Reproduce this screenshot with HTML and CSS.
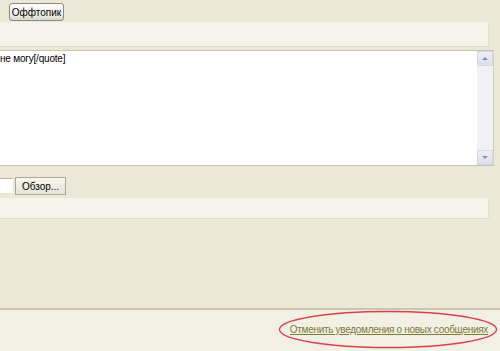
FILE: index.html
```html
<!DOCTYPE html>
<html lang="ru">
<head>
    <meta charset="UTF-8">
    <title>Ответ</title>
    <link rel="stylesheet" href="styles.css">
</head>
<body>
    <!-- Форма ответа -->
    <div class="reply-form">
        <div class="toolbar">
            <button class="btn">Оффтопик</button>
        </div>
        <div class="field-bar"></div>

        <div class="editor">
            <div class="editor-text">не могу[/quote]</div>
            <div class="scrollbar">
                <div class="scroll-btn"><span class="arrow-up"></span></div>
                <div class="scroll-track"></div>
                <div class="scroll-btn"><span class="arrow-down"></span></div>
            </div>
        </div>

        <div class="file-row">
            <span class="file-input"></span>
            <button class="btn btn-browse">Обзор...</button>
        </div>
        <div class="field-bar field-bar-low"></div>
    </div>

    <!-- Подвал темы -->
    <div class="topic-footer">
        <span class="mark">
            <a href="#" class="unsubscribe">Отменить уведомления о новых сообщениях</a>
            <svg class="ellipse" width="222" height="40" viewBox="0 0 222 40">
                <ellipse cx="110" cy="19.5" rx="108.5" ry="18" fill="none" stroke="#d9404c" stroke-width="1.4"/>
            </svg>
        </span>
    </div>
</body>
</html>
```

FILE: styles.css
```css
body {
    margin: 0;
    height: 351px;
    overflow: hidden;
    display: flex;
    flex-direction: column;
    background-color: #ebe8d5;
    font-family: "Liberation Sans", Arial, sans-serif;
    font-size: 10px;
    color: #000;
}
.reply-form {
    flex: 1;
    display: flex;
    flex-direction: column;
}
.toolbar {
    height: 22px;
    padding: 3px 0 0 9px;
    box-sizing: border-box;
}
.btn {
    width: 55px;
    height: 18px;
    padding: 0;
    font-family: "Liberation Sans", Arial, sans-serif;
    font-size: 10px;
    color: #000;
    background: linear-gradient(#ffffff, #ecebe6 70%, #d8d6cc);
    border: 1px solid #8a8a84;
    border-radius: 3px;
}
.field-bar {
    width: 489px;
    height: 25px;
    box-sizing: border-box;
    background-color: #f5f4ec;
    border-bottom: 1px solid #e2dfca;
    border-right: 1px solid #e2dfca;
}
.editor {
    margin-top: 3px;
    width: 494px;
    height: 116px;
    box-sizing: border-box;
    display: flex;
    background-color: #fff;
    border-top: 1px solid #c7c3ad;
    border-right: 1px solid #d4d1bf;
    border-bottom: 1px solid #c7c3ad;
}
.editor-text {
    flex: 1;
    padding-top: 2px;
    letter-spacing: -0.2px;
}
.scrollbar {
    width: 16px;
    display: flex;
    flex-direction: column;
    background-color: #f1f1f5;
}
.scroll-track {
    flex: 1;
}
.scroll-btn {
    height: 15px;
    display: flex;
    align-items: center;
    justify-content: center;
    background: linear-gradient(#eceef6, #dde0ec);
    border: 1px solid #d5d8e6;
    box-sizing: border-box;
}
.arrow-up, .arrow-down {
    width: 0;
    height: 0;
    border-left: 3px solid transparent;
    border-right: 3px solid transparent;
}
.arrow-up {
    border-bottom: 3px solid #8b8fa3;
}
.arrow-down {
    border-top: 3px solid #8b8fa3;
}
.file-row {
    margin-top: 11px;
    height: 18px;
    display: flex;
    align-items: center;
    gap: 2px;
}
.file-input {
    width: 13px;
    height: 16px;
    background-color: #fff;
    border-top: 1px solid #b9b6a3;
    border-bottom: 1px solid #e4e1d2;
    box-sizing: border-box;
}
.btn-browse {
    width: 51px;
    height: 18px;
    border-radius: 0;
    border-color: #a9a796;
    background: linear-gradient(#f6f5ef, #e6e4d8);
}
.field-bar-low {
    margin-top: 3px;
    height: 21px;
}
.topic-footer {
    height: 43px;
    box-sizing: border-box;
    border-top: 2px solid #c9c5af;
    background-color: #f2f0e5;
    display: flex;
    justify-content: flex-end;
    padding: 14px 12px 0 0;
}
.mark {
    position: relative;
    height: 14px;
}
.unsubscribe {
    font-size: 10px;
    letter-spacing: -0.3px;
    color: #7c7a34;
}
.ellipse {
    position: absolute;
    left: -12px;
    top: -14px;
}
```
